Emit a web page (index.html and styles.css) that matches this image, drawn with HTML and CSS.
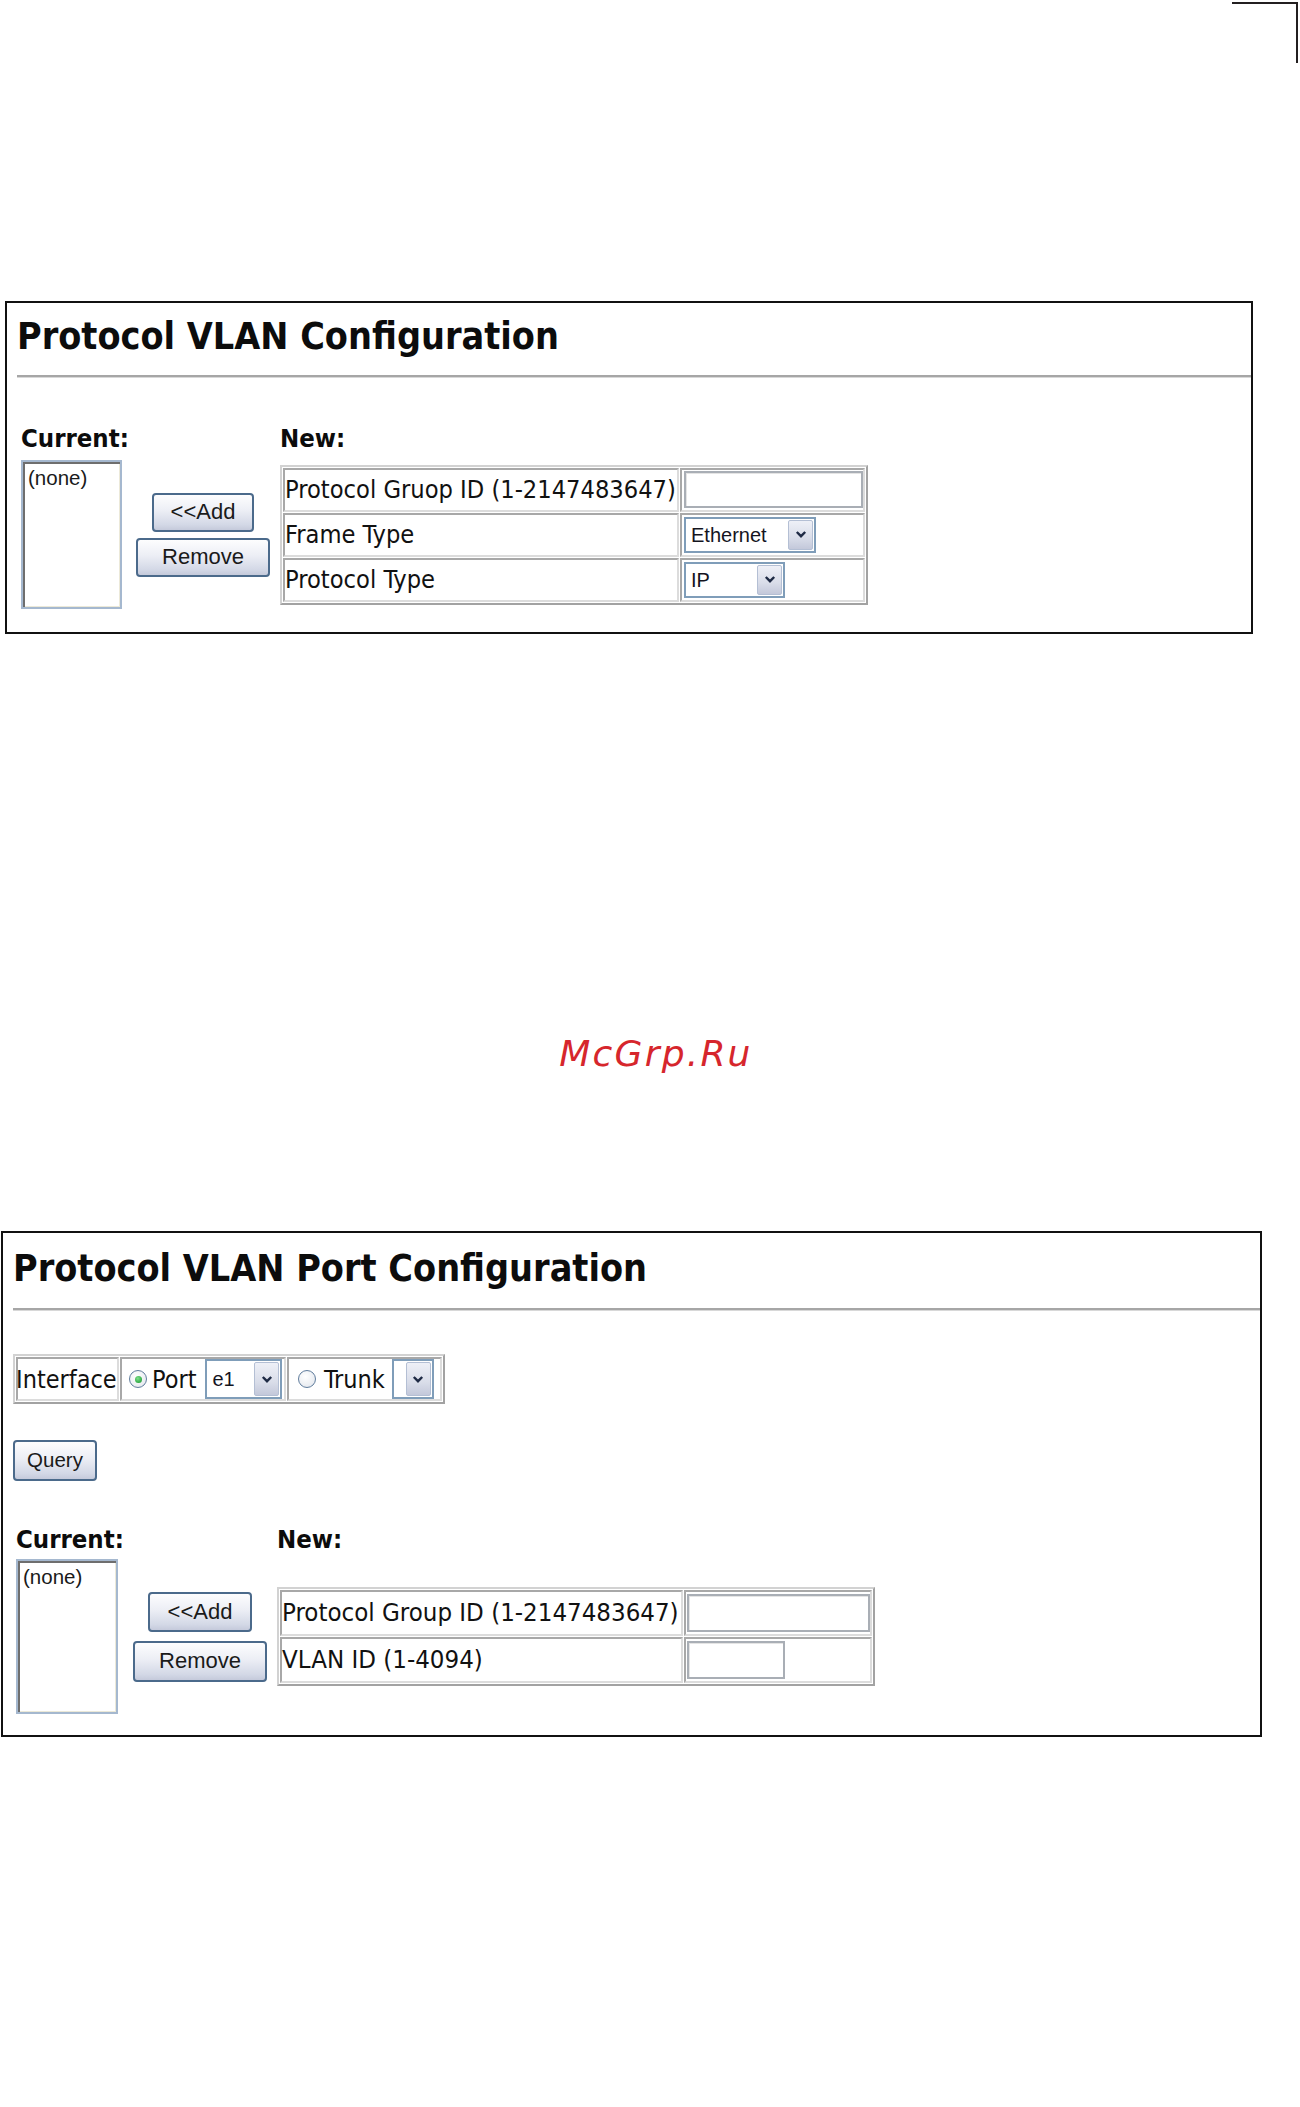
FILE: index.html
```html
<!DOCTYPE html>
<html lang="en">
<head>
<meta charset="utf-8">
<title>Protocol VLAN Configuration</title>
<link rel="stylesheet" href="styles.css">
</head>
<body>
<div class="page">
  <div class="crop-row"><div class="crop-mark"></div></div>

  <section class="panel panel-main">
    <h1 class="panel-title">Protocol VLAN Configuration</h1>
    <div class="divider"></div>
    <div class="panel-body">
      <div class="editor">
        <div class="section-label label-current">Current:</div>
        <div class="section-label label-new">New:</div>
        <div class="listbox">(none)</div>
        <div class="btn-stack">
          <button class="btn btn-add" type="button">&lt;&lt;Add</button>
          <button class="btn btn-remove" type="button">Remove</button>
        </div>
        <table class="form-table">
          <tr>
            <td class="cell-label">Protocol Gruop ID (1-2147483647)</td>
            <td class="cell-value"><div class="text-input input-wide"></div></td>
          </tr>
          <tr>
            <td class="cell-label">Frame Type</td>
            <td class="cell-value">
              <div class="select select-frame">
                <span class="select-value">Ethernet</span>
                <span class="select-arrow"><svg width="12" height="9" viewBox="0 0 12 9"><path d="M1.8 2 L6 6.2 L10.2 2" fill="none" stroke="#1f2b45" stroke-width="2.4"/></svg></span>
              </div>
            </td>
          </tr>
          <tr>
            <td class="cell-label">Protocol Type</td>
            <td class="cell-value">
              <div class="select select-proto">
                <span class="select-value">IP</span>
                <span class="select-arrow"><svg width="12" height="9" viewBox="0 0 12 9"><path d="M1.8 2 L6 6.2 L10.2 2" fill="none" stroke="#1f2b45" stroke-width="2.4"/></svg></span>
              </div>
            </td>
          </tr>
        </table>
      </div>
    </div>
  </section>

  <div class="watermark">McGrp.Ru</div>

  <section class="panel panel-port">
    <h1 class="panel-title">Protocol VLAN Port Configuration</h1>
    <div class="divider"></div>
    <div class="panel-body">
      <table class="iface-table">
        <tr>
          <td class="iface-label"><span class="iface-text">Interface</span></td>
          <td class="iface-port">
            <div class="opt-row">
              <span class="radio radio-on"></span>
              <span class="opt-text">Port</span>
              <div class="select select-port">
                <span class="select-value">e1</span>
                <span class="select-arrow"><svg width="12" height="9" viewBox="0 0 12 9"><path d="M1.8 2 L6 6.2 L10.2 2" fill="none" stroke="#1f2b45" stroke-width="2.4"/></svg></span>
              </div>
            </div>
          </td>
          <td class="iface-trunk">
            <div class="opt-row">
              <span class="radio"></span>
              <span class="opt-text">Trunk</span>
              <div class="select select-trunk">
                <span class="select-value"></span>
                <span class="select-arrow"><svg width="12" height="9" viewBox="0 0 12 9"><path d="M1.8 2 L6 6.2 L10.2 2" fill="none" stroke="#1f2b45" stroke-width="2.4"/></svg></span>
              </div>
            </div>
          </td>
        </tr>
      </table>

      <button class="btn btn-query" type="button">Query</button>

      <div class="editor editor-port">
        <div class="section-label label-current">Current:</div>
        <div class="section-label label-new">New:</div>
        <div class="listbox">(none)</div>
        <div class="btn-stack">
          <button class="btn btn-add" type="button">&lt;&lt;Add</button>
          <button class="btn btn-remove" type="button">Remove</button>
        </div>
        <table class="form-table">
          <tr>
            <td class="cell-label">Protocol Group ID (1-2147483647)</td>
            <td class="cell-value"><div class="text-input input-wide"></div></td>
          </tr>
          <tr>
            <td class="cell-label">VLAN ID (1-4094)</td>
            <td class="cell-value"><div class="text-input input-short"></div></td>
          </tr>
        </table>
      </div>
    </div>
  </section>
</div>
</body>
</html>
```

FILE: styles.css
```css
* { box-sizing: border-box; }

html, body {
  margin: 0;
  padding: 0;
  background: #ffffff;
}

body {
  width: 1300px;
  font-family: "DejaVu Sans Condensed", "DejaVu Sans", sans-serif;
  font-stretch: condensed;
  color: #111111;
}

.page {
  padding-top: 2px;
}

/* crop mark at the top right */
.crop-row {
  display: flex;
  justify-content: flex-end;
  padding-right: 2px;
}
.crop-mark {
  width: 66px;
  height: 61px;
  border-top: 2px solid #231f20;
  border-right: 2px solid #231f20;
}

/* panels */
.panel {
  border: 2px solid #111111;
}
.panel-main {
  margin: 238px 0 0 5px;
  width: 1248px;
}
.panel-port {
  margin: 0 0 0 1px;
  width: 1261px;
}

.panel-title {
  margin: 0;
  padding: 11px 0 0 10px;
  font-size: 37.4px;
  line-height: 44px;
  font-weight: bold;
  color: #0c0c0c;
}
.panel-port .panel-title {
  padding: 13px 0 0 10px;
}

.divider {
  margin: 17px 0 0 10px;
  height: 3px;
  border-top: 2px solid #a6a6a6;
  border-bottom: 1px solid #d8d8d8;
}
.panel-port .divider {
  margin: 18px 0 0 10px;
}

.panel-body {
  padding: 45px 0 23px 14px;
}
.panel-port .panel-body {
  padding: 43px 0 21px 10px;
}

/* editor: current list, buttons, new table */
.editor {
  display: grid;
  grid-template-columns: 101px 158px auto;
  row-gap: 7px;
  align-items: center;
  justify-items: start;
}
.editor-port {
  margin: 43px 0 0 3px;
  grid-template-columns: 102px 159px auto;
  row-gap: 5px;
}

.section-label {
  font-size: 25.5px;
  line-height: 30px;
  font-weight: bold;
  color: #0c0c0c;
}
.label-current {
  grid-column: 1 / 3;
}
.label-new {
  grid-column: 3;
}

.listbox {
  width: 101px;
  height: 149px;
  padding: 4px 5px;
  border: 2px solid #a5b8cf;
  box-shadow: inset 2px 2px 0 #6e6e6e, inset -1px -1px 0 #ece9d8;
  background: #ffffff;
  font-family: "Liberation Sans", Arial, sans-serif;
  font-stretch: normal;
  font-size: 20.5px;
  line-height: 24px;
  color: #1a1a1a;
}
.editor-port .listbox {
  width: 102px;
  height: 155px;
}

.btn-stack {
  justify-self: center;
  display: flex;
  flex-direction: column;
  align-items: center;
  gap: 6px;
  padding-left: 4px;
}
.editor-port .btn-stack {
  gap: 9px;
  padding-left: 5px;
}

.btn {
  margin: 0;
  padding: 0;
  border: 2px solid #4b6a8b;
  border-radius: 4px;
  background: linear-gradient(#fdfdfe 0%, #eceef5 45%, #d3d8e6 85%, #c5cadb 100%);
  font-family: "Liberation Sans", Arial, sans-serif;
  font-size: 22px;
  line-height: 1;
  color: #1a1a1a;
  text-align: center;
}
.btn-add {
  width: 102px;
  height: 39px;
}
.btn-remove {
  width: 134px;
  height: 39px;
}
.editor-port .btn-add {
  width: 104px;
  height: 40px;
}
.editor-port .btn-remove {
  height: 41px;
}
.btn-query {
  display: block;
  margin-top: 36px;
  width: 84px;
  height: 41px;
  font-size: 20.5px;
}

/* form tables */
.form-table {
  border: 2px solid;
  border-color: #d2d2d2 #a2a2a2 #a2a2a2 #d2d2d2;
  border-spacing: 1px;
  font-size: 25.2px;
  line-height: 1;
  color: #111111;
}
.form-table td {
  height: 44px;
  padding: 0;
  border: 2px solid;
  border-color: #a8a8a8 #dcdcdc #dcdcdc #a8a8a8;
  vertical-align: middle;
  white-space: nowrap;
}
.editor-port .form-table td {
  height: 46px;
}
.editor-port .form-table {
  font-size: 25.6px;
}
.form-table .cell-label {
  width: 396px;
}
.form-table .cell-value {
  width: 185px;
}
.editor-port .form-table .cell-label {
  width: 403px;
}
.editor-port .form-table .cell-value {
  width: 188px;
}

.text-input {
  margin-left: 2px;
  height: 37px;
  border: 2px solid #a9aeb5;
  box-shadow: inset 1px 1px 0 #e4e4e4;
  background: #ffffff;
}
.input-wide {
  width: 179px;
}
.editor-port .text-input {
  margin-left: 1px;
  height: 38px;
}
.editor-port .input-wide {
  width: 183px;
}
.input-short {
  width: 98px;
}

/* drop-down look */
.select {
  display: flex;
  align-items: stretch;
  margin-left: 2px;
  height: 36px;
  border: 2px solid #7f9db9;
  background: #ffffff;
}
.select-value {
  flex: 1;
  display: flex;
  align-items: center;
  padding-left: 5px;
  font-family: "Liberation Sans", Arial, sans-serif;
  font-stretch: normal;
  font-size: 20px;
  color: #14141e;
  overflow: hidden;
}
.select-arrow {
  flex: none;
  width: 25px;
  margin: 1px;
  display: flex;
  align-items: center;
  justify-content: center;
  border: 1px solid #b4bfd4;
  border-radius: 2px;
  background: linear-gradient(#eef0f7, #d9dde9 60%, #c3c8da);
}
.select-frame {
  width: 132px;
}
.select-proto {
  width: 101px;
}

/* interface table */
.iface-table {
  border: 2px solid;
  border-color: #d2d2d2 #a2a2a2 #a2a2a2 #d2d2d2;
  border-spacing: 1px;
  font-size: 25px;
  line-height: 1;
  color: #111111;
}
.iface-table td {
  height: 44px;
  padding: 0;
  border: 2px solid;
  border-color: #a8a8a8 #dcdcdc #dcdcdc #a8a8a8;
  vertical-align: middle;
  white-space: nowrap;
}
.iface-label {
  width: 103px;
}
.iface-text {
  margin-left: -2px;
}
.iface-port {
  width: 166px;
}
.iface-trunk {
  width: 155px;
}
.opt-row {
  display: flex;
  align-items: center;
}
.iface-port .radio {
  margin-left: 7px;
}
.iface-trunk .radio {
  margin-left: 9px;
}
.opt-text {
  margin-left: 5px;
}
.iface-trunk .opt-text {
  margin-left: 8px;
}
.select-port {
  margin-left: 9px;
  width: 77px;
  height: 40px;
}
.select-trunk {
  margin-left: 7px;
  width: 42px;
  height: 40px;
}
.select-trunk .select-value {
  padding-left: 0;
}

.radio {
  flex: none;
  display: flex;
  width: 18px;
  height: 18px;
  border-radius: 50%;
  border: 1.5px solid #5f7c9c;
  background: radial-gradient(circle at 40% 35%, #ffffff 0%, #e9ecf1 70%, #d3d8e0 100%);
  align-items: center;
  justify-content: center;
}
.radio-on::after {
  content: "";
  width: 7px;
  height: 7px;
  border-radius: 50%;
  background: radial-gradient(circle at 40% 35%, #7fe08c 0%, #2faa45 70%, #1f8a35 100%);
}

/* watermark */
.watermark {
  margin: 400px 0 157px 0;
  padding-left: 12px;
  text-align: center;
  font-family: "DejaVu Sans", sans-serif;
  font-stretch: normal;
  font-style: oblique;
  font-size: 36px;
  line-height: 40px;
  letter-spacing: 2.2px;
  color: #d6262c;
}
```
